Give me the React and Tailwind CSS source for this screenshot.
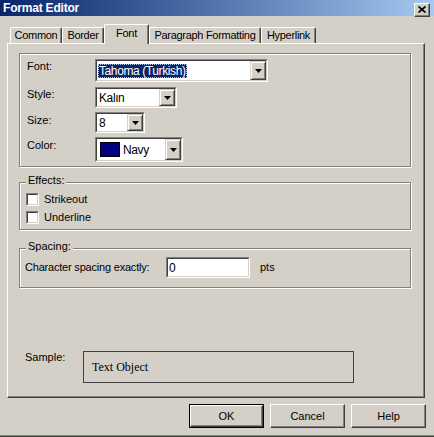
import clsx from "clsx";

const FACE = "bg-[#d4d0c8]";

function Sunken({ className, inner, children }) {
  return (
    <div className={clsx("border border-t-[#808080] border-l-[#808080] border-r-white border-b-white", className)}>
      <div className={clsx("h-full border border-t-[#404040] border-l-[#404040] border-r-[#d4d0c8] border-b-[#d4d0c8]", inner)}>
        {children}
      </div>
    </div>
  );
}

function DropButton() {
  return (
    <div className="w-[16px] h-full bg-[#d4d0c8] border border-t-[#d4d0c8] border-l-[#d4d0c8] border-r-[#404040] border-b-[#404040] shadow-[inset_1px_1px_0_#fff,inset_-1px_-1px_0_#808080] flex items-center justify-center">
      <svg width="7" height="4" viewBox="0 0 7 4">
        <polygon points="0,0 7,0 3.5,4" fill="#000" />
      </svg>
    </div>
  );
}

function Combo({ w, h, children }) {
  return (
    <Sunken className={clsx(w, h)} inner="flex items-stretch bg-white">
      <div className="flex-1 flex items-center pl-px text-[12px] tracking-[-0.4px] overflow-hidden">{children}</div>
      <DropButton />
    </Sunken>
  );
}

function Checkbox({ label, first }) {
  return (
    <div className={clsx("flex items-center", !first && "mt-[5px]")}>
      <Sunken className="w-[13px] h-[13px]" inner="bg-white" />
      <span className="ml-[5px] leading-[13px]">{label}</span>
    </div>
  );
}

function Group({ label, className, children }) {
  return (
    <div className={clsx("relative w-[392px] border border-[#808080] shadow-[1px_1px_0_#fff,inset_1px_1px_0_#fff]", className)}>
      {label && (
        <span className="absolute left-[6px] -top-[9px] px-[2px] bg-[#d4d0c8] leading-[13px]">{label}</span>
      )}
      {children}
    </div>
  );
}

function Tab({ label, w, selected }) {
  return (
    <div
      className={clsx(
        "flex justify-center border-l border-t border-white border-r border-r-[#404040] rounded-t-[2px] shadow-[inset_-1px_0_0_#808080] bg-[#d4d0c8] tracking-[-0.3px]",
        w,
        selected ? "h-[20px] -mb-px relative z-10 pt-[2px]" : "h-[16px] pt-[1px]"
      )}
    >
      <span className="leading-[13px]">{label}</span>
    </div>
  );
}

function Button({ label, primary }) {
  const face = (
    <div className="w-full h-full flex items-center justify-center border border-t-white border-l-white border-r-[#404040] border-b-[#404040] shadow-[inset_-1px_-1px_0_#808080] bg-[#d4d0c8]">
      {label}
    </div>
  );
  return primary ? (
    <div className="w-[75px] h-[24px] border border-black">{face}</div>
  ) : (
    <div className="w-[75px] h-[24px]">{face}</div>
  );
}

export default function App() {
  return (
    <div className={clsx("w-[434px] h-[437px] flex flex-col overflow-hidden text-black text-[11px] font-['Liberation_Sans',Arial,sans-serif]", FACE)}>
      {/* title bar */}
      <div className="h-[16px] flex items-center justify-between pl-[3px] pr-[4px] bg-linear-to-r from-[#0a246a] to-[#a6caf0]">
        <span className="text-white font-bold text-[12px] tracking-[-0.2px] leading-[14px]">Format Editor</span>
        <div className="w-[16px] h-[14px] mt-[3px] flex items-center justify-center bg-[#d4d0c8] border border-t-white border-l-white border-r-[#404040] border-b-[#404040] shadow-[inset_-1px_-1px_0_#808080]">
          <svg width="8" height="7" viewBox="0 0 8 7">
            <path d="M0.5 0.5 L7.5 6.5 M7.5 0.5 L0.5 6.5" stroke="#000" strokeWidth="1.7" />
          </svg>
        </div>
      </div>

      {/* tabs */}
      <div className="pt-[8px] pl-[10px] h-[27px] flex items-end">
        <Tab label="Common" w="w-[52px]" />
        <Tab label="Border" w="w-[42px]" />
        <Tab label="Font" w="w-[45px]" selected />
        <Tab label="Paragraph Formatting" w="w-[112px]" />
        <Tab label="Hyperlink" w="w-[55px]" />
      </div>

      {/* tab panel */}
      <div className="ml-[7px] w-[418px] h-[355px] border-l border-t border-white border-r border-b border-r-[#404040] border-b-[#404040] shadow-[inset_-1px_-1px_0_#808080] pt-[9px] pl-[11px] flex flex-col">
        <Group className="h-[114px] pt-[5px] pl-[7px]">
          <div className="flex items-start">
            <span className="w-[68px] leading-[13px] pt-px">Font:</span>
            <Combo w="w-[173px]" h="h-[23px]">
              <span className="bg-[#0a246a] text-white leading-[14px] px-px outline outline-dotted outline-[#a6caf0] -outline-offset-1">
                Tahoma (Turkish)
              </span>
            </Combo>
          </div>
          <div className="flex items-start mt-[5px]">
            <span className="w-[68px] leading-[13px] pt-px">Style:</span>
            <Combo w="w-[82px]" h="h-[21px]">
              <span className="pl-px">Kalın</span>
            </Combo>
          </div>
          <div className="flex items-start mt-[4px]">
            <span className="w-[68px] leading-[13px] pt-[2px]">Size:</span>
            <Combo w="w-[50px]" h="h-[21px]">
              <span className="pl-px">8</span>
            </Combo>
          </div>
          <div className="flex items-start mt-[4px]">
            <span className="w-[68px] leading-[13px] pt-[2px]">Color:</span>
            <Combo w="w-[88px]" h="h-[25px]">
              <span className="ml-[2px] w-[20px] h-[15px] bg-[#000080] border border-black" />
              <span className="ml-[3px]">Navy</span>
            </Combo>
          </div>
        </Group>

        <Group label="Effects:" className="mt-[15px] h-[48px] pt-[10px] pl-[6px]">
          <Checkbox label="Strikeout" first />
          <Checkbox label="Underline" />
        </Group>

        <Group label="Spacing:" className="mt-[18px] h-[40px] pt-[8px] pl-[5px]">
          <div className="flex items-center">
            <span className="w-[141px] leading-[13px] tracking-[-0.2px]">Character spacing exactly:</span>
            <Sunken className="w-[84px] h-[21px]" inner="bg-white flex items-center pl-[1px] text-[12px]">
              0
            </Sunken>
            <span className="ml-[10px]">pts</span>
          </div>
        </Group>

        <div className="mt-[63px] pl-[6px] flex items-start">
          <span className="w-[58px] leading-[13px]">Sample:</span>
          <div className="w-[271px] h-[32px] border border-[#404040] flex items-center pl-[8px] font-['Liberation_Serif','Times_New_Roman',serif] text-[12px]">
            Text Object
          </div>
        </div>
      </div>

      {/* buttons */}
      <div className="mt-[6px] pl-[189px] flex gap-[6px]">
        <Button label="OK" primary />
        <Button label="Cancel" />
        <Button label="Help" />
      </div>

      {/* window bottom edge */}
      <div className="mt-auto h-[2px] border-t border-[#808080] bg-[#404040]" />
    </div>
  );
}
